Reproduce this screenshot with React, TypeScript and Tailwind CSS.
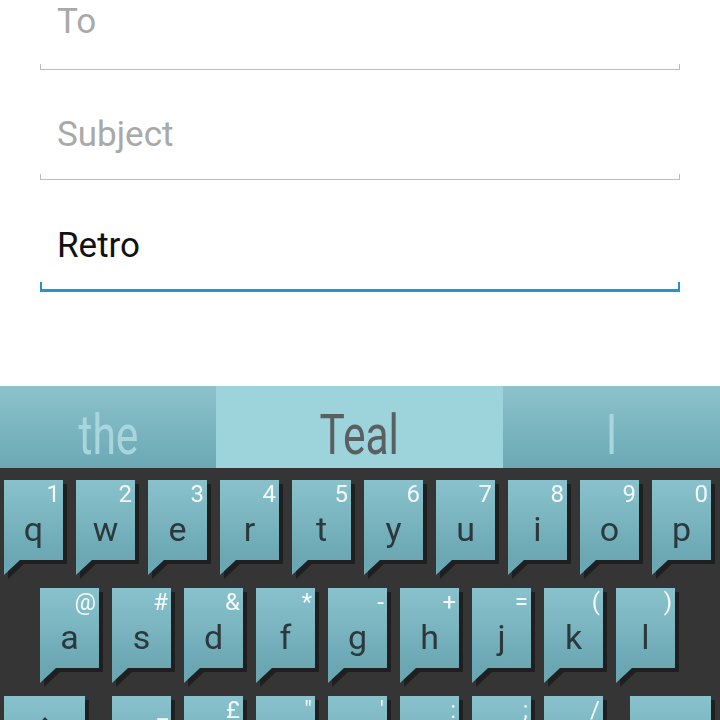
const row1 = [
  ["1", "q"], ["2", "w"], ["3", "e"], ["4", "r"], ["5", "t"],
  ["6", "y"], ["7", "u"], ["8", "i"], ["9", "o"], ["0", "p"],
];
const row2 = [
  ["@", "a"], ["#", "s"], ["&", "d"], ["*", "f"], ["-", "g"],
  ["+", "h"], ["=", "j"], ["(", "k"], [")", "l"],
];
const row3 = [
  ["_", "z"], ["£", "x"], ['"', "c"], ["'", "v"], [":", "b"], [";", "n"], ["/", "m"],
];

const Key = ({ hint, label, wide, className = "", children }: any) => (
  <div
    className={`flex flex-col shrink-0 drop-shadow-[4px_4px_0_#1f1f1f] ${
      wide ? "w-[81px]" : "w-[59px]"
    } ${className}`}
  >
    <div className="h-[80px] flex flex-col bg-linear-to-b from-[#89c2cc] to-[#6aa7b3]">
      {children ? (
        children
      ) : (
        <>
          <div className="pt-[2px] pr-[3px] text-right text-[24px] leading-[24px] text-[#f4fafb]">
            {hint}
          </div>
          <div className="mt-[6px] text-center text-[34px] leading-[34px] text-[#2c393c]">
            {label}
          </div>
        </>
      )}
    </div>
    <div className="h-[15px] w-[16px] bg-[#6aa7b3] [clip-path:polygon(0_0,100%_0,0_100%)]" />
  </div>
);

const Field = ({ text, placeholder, active, height, pb }: any) => (
  <div className={`mx-[40px] flex flex-col justify-end shrink-0 ${height}`}>
    <div
      className={`pl-[17px] text-[35px] leading-[35px] ${pb} ${
        placeholder ? "text-[#a9a9a9]" : "text-[#111111]"
      }`}
    >
      {text}
    </div>
    {active ? (
      <div className="h-[10px] border-x-2 border-b-[3px] border-[#1f97cc]" />
    ) : (
      <div className="h-[6px] border-x border-b border-[#bdbdbd]" />
    )}
  </div>
);

export default function App() {
  return (
    <div className="w-[720px] h-[720px] overflow-hidden flex flex-col bg-white font-[Roboto,sans-serif]">
      {/* compose fields */}
      <div className="h-[386px] shrink-0 flex flex-col">
        <Field text="To" placeholder height="h-[70px]" pb="pb-[25px]" />
        <Field text="Subject" placeholder height="h-[110px]" pb="pb-[22px]" />
        <Field text="Retro" active height="h-[112px]" pb="pb-[19px]" />
      </div>

      {/* suggestions */}
      <div className="h-[82px] flex shrink-0">
        <div className="w-[216px] flex justify-center pt-[21px] bg-linear-to-b from-[#8dc2cb] to-[#6aa9b4] text-[#a9d6dc]">
          <span className="inline-block scale-x-[0.76] text-[56px] leading-[56px]">the</span>
        </div>
        <div className="w-[287px] flex justify-center pt-[21px] bg-[#9dd3db] text-[#5a5f61]">
          <span className="inline-block scale-x-[0.76] text-[56px] leading-[56px]">Teal</span>
        </div>
        <div className="flex-1 flex justify-center pt-[21px] bg-linear-to-b from-[#8dc2cb] to-[#6aa9b4] text-[#a9d6dc]">
          <span className="inline-block scale-x-[0.76] text-[56px] leading-[56px]">I</span>
        </div>
      </div>

      {/* keyboard */}
      <div className="flex-1 shrink-0 bg-[#353535] pt-[12px] flex flex-col gap-[13px]">
        <div className="flex gap-[13px] pl-[4px]">
          {row1.map(([h, l]) => (
            <Key key={l} hint={h} label={l} />
          ))}
        </div>
        <div className="flex gap-[13px] pl-[40px]">
          {row2.map(([h, l]) => (
            <Key key={l} hint={h} label={l} />
          ))}
        </div>
        <div className="flex gap-[13px] pl-[4px]">
          <Key wide>
            <div className="flex justify-center pt-[19px]">
              <svg width="30" height="30" viewBox="0 0 30 30">
                <path d="M15 2 L28 16 H20 V28 H10 V16 H2 Z" fill="#2c393c" />
              </svg>
            </div>
          </Key>
          {row3.map(([h, l], i) => (
            <Key key={l} hint={h} label={l} className={i === 0 ? "ml-[14px]" : ""} />
          ))}
          <Key wide className="ml-[14px]">
            <div />
          </Key>
        </div>
      </div>
    </div>
  );
}
